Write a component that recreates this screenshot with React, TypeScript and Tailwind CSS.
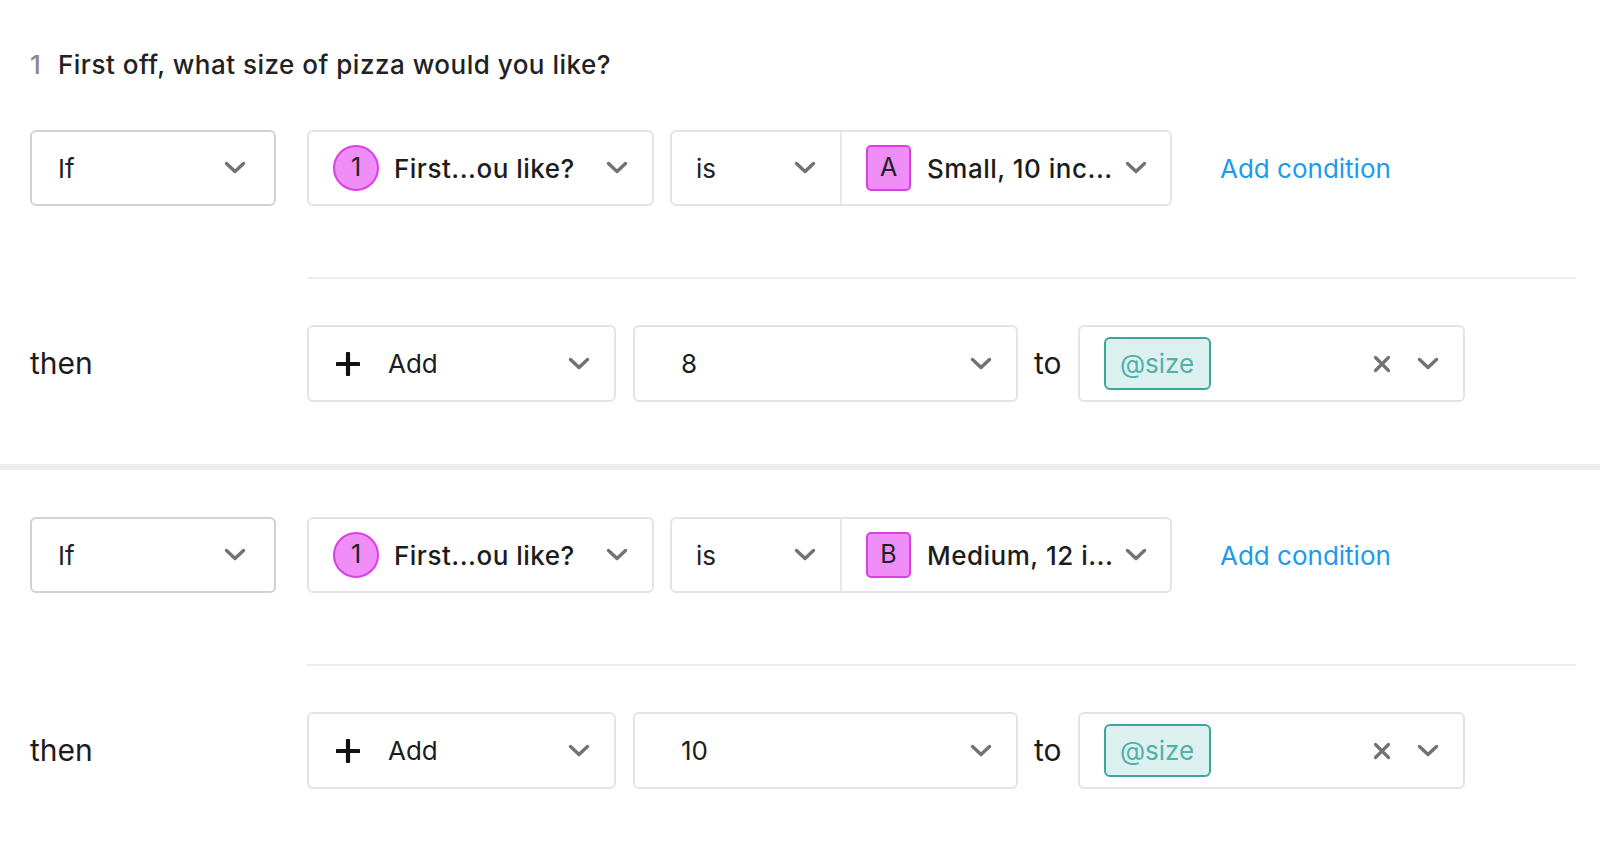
import React from 'react'

const font = { fontFamily: 'Inter, "Noto Sans", "Liberation Sans", sans-serif' }

function Chevron() {
  return (
    <svg width="22" height="14" viewBox="0 0 22 14" fill="none" className="shrink-0">
      <path d="M2.5 2.5 L11 10.5 L19.5 2.5" stroke="#727272" strokeWidth="3.4" strokeLinecap="round" strokeLinejoin="round" />
    </svg>
  )
}

function Cross() {
  return (
    <svg width="18" height="18" viewBox="0 0 18 18" fill="none" className="shrink-0">
      <path d="M2.5 2.5 L15.5 15.5 M15.5 2.5 L2.5 15.5" stroke="#727272" strokeWidth="3.2" strokeLinecap="round" />
    </svg>
  )
}

function Plus() {
  return (
    <svg width="24" height="24" viewBox="0 0 24 24" fill="none" className="shrink-0">
      <path d="M12 1.5 V22.5 M1.5 12 H22.5" stroke="#111" strokeWidth="4.2" strokeLinecap="round" />
    </svg>
  )
}

type Rule = { letter: string; answer: string; amount: string }

const rules: Rule[] = [
  { letter: 'A', answer: 'Small, 10 inc...', amount: '8' },
  { letter: 'B', answer: 'Medium, 12 i...', amount: '10' },
]

function RuleBlock({ rule, first }: { rule: Rule; first: boolean }) {
  return (
    <div className={`pl-[30px] pr-[24px] pb-[62px] ${first ? 'pt-[48px]' : 'pt-[47px]'}`}>
      {first && (
        <div className="flex items-center h-[32px] text-[26px] font-medium tracking-[0.5px] text-[#222]">
          <span className="text-[#8a8a8a] w-[28px]">1</span>
          <span>First off, what size of pizza would you like?</span>
        </div>
      )}

      <div className={`flex items-center h-[76px] ${first ? 'mt-[50px]' : ''}`}>
        <div className="w-[246px] h-full flex items-center justify-between pl-[26px] pr-[28px] border-2 border-[#d2d2d2] rounded-[6px] text-[26px] text-[#222]">
          <span>If</span>
          <Chevron />
        </div>

        <div className="ml-[31px] w-[347px] h-full flex items-center pl-[24px] pr-[24px] border-2 border-[#e4e4e4] rounded-[6px]">
          <div className="w-[46px] h-[46px] rounded-full bg-[#ee8ef6] border-2 border-[#dc3ee4] flex items-center justify-center text-[25px] text-[#222] shrink-0">
            1
          </div>
          <span className="ml-[15px] text-[26px] font-medium tracking-[0.5px] text-[#1c1c1c] flex-1 whitespace-nowrap overflow-hidden">First...ou like?</span>
          <Chevron />
        </div>

        <div className="ml-[16px] w-[502px] h-full flex border-2 border-[#e4e4e4] rounded-[6px]">
          <div className="w-[170px] flex items-center justify-between pl-[24px] pr-[24px] border-r-2 border-[#e8e8e8] text-[26px] text-[#222]">
            <span>is</span>
            <Chevron />
          </div>
          <div className="flex-1 flex items-center pl-[24px] pr-[23px]">
            <div className="w-[45px] h-[46px] rounded-[5px] bg-[#ee8ef6] border-2 border-[#dc3ee4] flex items-center justify-center text-[25px] text-[#222] shrink-0">
              {rule.letter}
            </div>
            <span className="ml-[16px] flex-1 text-[26px] font-medium tracking-[0.5px] text-[#1c1c1c] whitespace-nowrap overflow-hidden">{rule.answer}</span>
            <Chevron />
          </div>
        </div>

        <span className="ml-[48px] text-[26px] text-[#1a9bf0] whitespace-nowrap">Add condition</span>
      </div>

      <div className="ml-[277px] mt-[71px] h-[2px] bg-[#ececec]" />

      <div className="mt-[46px] flex items-center h-[77px]">
        <span className="w-[277px] text-[30px] text-[#1c1c1c]">then</span>

        <div className="w-[309px] h-full flex items-center pl-[27px] pr-[24px] border-2 border-[#e4e4e4] rounded-[6px]">
          <Plus />
          <span className="ml-[28px] flex-1 text-[26px] text-[#1c1c1c]">Add</span>
          <Chevron />
        </div>

        <div className="ml-[17px] w-[385px] h-full flex items-center pl-[46px] pr-[24px] border-2 border-[#e4e4e4] rounded-[6px]">
          <span className="flex-1 text-[26px] text-[#1c1c1c]">{rule.amount}</span>
          <Chevron />
        </div>

        <span className="ml-[16px] text-[30px] text-[#1c1c1c]">to</span>

        <div className="ml-[16px] w-[387px] h-full flex items-center pl-[24px] pr-[24px] border-2 border-[#e4e4e4] rounded-[6px]">
          <div className="w-[107px] h-[53px] rounded-[6px] bg-[#dcf0ef] border-2 border-[#3aa79f] flex items-center justify-center text-[26px] text-[#4eb2a9]">
            @size
          </div>
          <div className="flex-1" />
          <Cross />
          <div className="ml-[26px]">
            <Chevron />
          </div>
        </div>
      </div>
    </div>
  )
}

export default function App() {
  return (
    <div className="w-[1600px] h-[850px] bg-white overflow-hidden" style={font}>
      {rules.map((rule, i) => (
        <React.Fragment key={rule.letter}>
          {i > 0 && <div className="h-[6px] bg-[#ededed]" />}
          <RuleBlock rule={rule} first={i === 0} />
        </React.Fragment>
      ))}
    </div>
  )
}
